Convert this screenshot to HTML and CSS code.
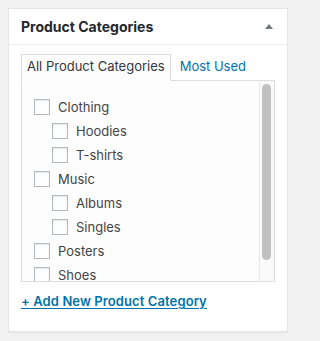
FILE: index.html
```html
<!DOCTYPE html>
<html lang="en">
<head>
<meta charset="utf-8">
<title>Product Categories</title>
<link rel="stylesheet" href="styles.css">
</head>
<body>
<div class="postbox">
  <h2 class="hndle">
    <span>Product Categories</span>
    <svg class="toggle" width="8" height="5" viewBox="0 0 8 5" aria-hidden="true"><polygon points="0,5 8,5 4,0" fill="#72777c"/></svg>
  </h2>
  <div class="inside">
    <ul class="category-tabs">
      <li class="tab active"><a href="#">All Product Categories</a></li>
      <li class="tab"><a href="#">Most Used</a></li>
    </ul>
    <div class="tabs-panel">
      <div class="panel-list">
        <ul class="checklist">
          <li><label class="item"><input type="checkbox"> Clothing</label>
            <ul class="children">
              <li><label class="item"><input type="checkbox"> Hoodies</label></li>
              <li><label class="item"><input type="checkbox"> T-shirts</label></li>
            </ul>
          </li>
          <li><label class="item"><input type="checkbox"> Music</label>
            <ul class="children">
              <li><label class="item"><input type="checkbox"> Albums</label></li>
              <li><label class="item"><input type="checkbox"> Singles</label></li>
            </ul>
          </li>
          <li><label class="item"><input type="checkbox"> Posters</label></li>
          <li><label class="item"><input type="checkbox"> Shoes</label></li>
        </ul>
      </div>
      <div class="scrollbar" aria-hidden="true"><div class="thumb"></div></div>
    </div>
    <p class="adder"><a href="#">+ Add New Product Category</a></p>
  </div>
</div>
</body>
</html>
```
FILE: styles.css
```css
html, body {
  margin: 0;
  background: #f1f1f1;
}
body {
  padding: 8px;
  font-family: Inter, "Liberation Sans", sans-serif;
  font-size: 13px;
  color: #444;
}
.postbox {
  box-sizing: border-box;
  width: 280px;
  background: #fff;
  border: 1px solid #e5e5e5;
  box-shadow: 0 1px 1px rgba(0, 0, 0, 0.04);
}
.hndle {
  display: flex;
  justify-content: space-between;
  align-items: center;
  margin: 0;
  padding: 8px 14px 8px 12px;
  font-size: 14px;
  font-weight: 700;
  line-height: 19px;
  color: #23282d;
  border-bottom: 1px solid #eee;
}
.toggle {
  display: block;
}
.inside {
  padding: 9px 12px 12px;
}
.category-tabs {
  display: flex;
  gap: 3px;
  margin: 0;
  padding: 0;
  list-style: none;
}
.tab {
  padding: 3px 5px 6px;
  line-height: 16px;
  border: 1px solid transparent;
  margin-bottom: -1px;
  position: relative;
  z-index: 1;
}
.tab a {
  color: #0073aa;
  text-decoration: none;
}
.tab.active {
  border-color: #ddd;
  border-bottom-color: #fdfdfd;
  background: #fdfdfd;
}
.tab.active a {
  color: #32373c;
}
.tabs-panel {
  display: flex;
  height: 200px;
  border: 1px solid #ddd;
  background: #fdfdfd;
}
.panel-list {
  flex: 1;
  min-width: 0;
  overflow: hidden;
  padding-left: 12px;
}
.scrollbar {
  box-sizing: border-box;
  flex: none;
  width: 15px;
  padding: 3px 3px 0 2px;
  border-left: 1px solid #e8e8e8;
  background: #fafafa;
}
.thumb {
  height: 176px;
  background: #c1c1c1;
  border-radius: 5px;
}
.checklist {
  margin: 0;
  padding: 14px 0 14px;
  list-style: none;
}
.children {
  margin: 0;
  padding: 0 0 0 18px;
  list-style: none;
}
.item {
  display: flex;
  align-items: center;
  gap: 8px;
  height: 24px;
  line-height: 24px;
  font-size: 13px;
  color: #444;
}
.item input {
  appearance: none;
  -webkit-appearance: none;
  box-sizing: border-box;
  width: 16px;
  height: 16px;
  margin: 0;
  border: 1px solid #b4b9be;
  border-radius: 0;
  background: #fff;
  box-shadow: inset 0 1px 2px rgba(0, 0, 0, 0.1);
  flex: none;
}
.adder {
  margin: 10px 0 9px;
  line-height: 18px;
}
.adder a {
  color: #0073aa;
  font-weight: 600;
  letter-spacing: 0.1px;
  text-decoration: underline;
  text-underline-offset: 2px;
}
```
